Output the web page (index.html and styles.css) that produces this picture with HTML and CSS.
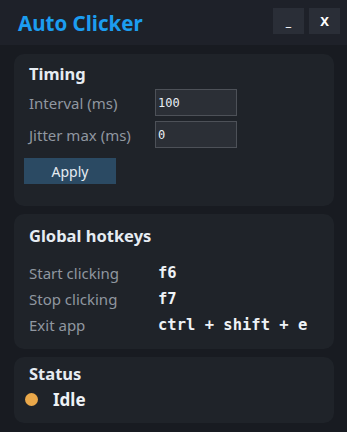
FILE: index.html
```html
<!DOCTYPE html>
<html lang="en">
<head>
    <meta charset="UTF-8">
    <meta name="viewport" content="width=device-width, initial-scale=1.0">
    <title>Auto Clicker</title>
    <link rel="stylesheet" href="styles.css">
</head>
<body>
    <div class="titlebar">
        <h1>Auto Clicker</h1>
        <div class="window-buttons">
            <button class="win-btn">_</button>
            <button class="win-btn">X</button>
        </div>
    </div>

    <div class="content">
        <div class="card timing">
            <h2>Timing</h2>
            <div class="field">
                <label for="interval">Interval (ms)</label>
                <input id="interval" type="text" value="100">
            </div>
            <div class="field">
                <label for="jitter">Jitter max (ms)</label>
                <input id="jitter" type="text" value="0">
            </div>
            <button class="apply">Apply</button>
        </div>

        <div class="card hotkeys">
            <h2>Global hotkeys</h2>
            <div class="hotkey-list">
                <span class="hk-label">Start clicking</span><span class="hk-key">f6</span>
                <span class="hk-label">Stop clicking</span><span class="hk-key">f7</span>
                <span class="hk-label">Exit app</span><span class="hk-key">ctrl + shift + e</span>
            </div>
        </div>

        <div class="card status">
            <h2>Status</h2>
            <div class="status-row">
                <span class="dot"></span>
                <span class="status-text">Idle</span>
            </div>
        </div>
    </div>
</body>
</html>
```

FILE: styles.css
```css
* {
    box-sizing: border-box;
    font-family: "Noto Sans", "Open Sans", sans-serif;
}
body {
    margin: 0;
    background-color: #181b21;
    color: #e6e9ee;
    width: 347px;
    height: 432px;
    overflow: hidden;
}
.titlebar {
    height: 45px;
    background-color: #1e2129;
    display: flex;
    align-items: flex-start;
    justify-content: space-between;
    padding: 0 7px 0 18px;
}
h1 {
    margin: 9px 0 0 0;
    font-size: 20.5px;
    font-weight: 700;
    color: #1c9df0;
    line-height: 28px;
}
.window-buttons {
    display: flex;
    gap: 5px;
    margin-top: 8px;
}
.win-btn {
    width: 31px;
    height: 26px;
    border: none;
    background-color: #2a2e37;
    color: #ffffff;
    font-size: 13px;
    font-weight: 700;
    padding: 0;
}
.content {
    display: flex;
    flex-direction: column;
    gap: 8px;
    padding: 9px 13px 0 14px;
}
.card {
    background-color: #1f2329;
    border-radius: 10px;
    padding: 8px 15px 0 15px;
}
h2 {
    margin: 0;
    font-size: 16.5px;
    font-weight: 700;
    color: #e6ecf2;
    line-height: 24px;
}
.timing {
    height: 152px;
}
.field {
    display: flex;
    align-items: center;
    height: 27px;
    margin-top: 3px;
}
.field + .field {
    margin-top: 5px;
}
label {
    width: 126px;
    font-size: 15px;
    color: #9097a0;
}
input {
    width: 82px;
    height: 27px;
    background-color: #2b2f36;
    border: 1px solid #4d5158;
    color: #e8eef4;
    font-family: "DejaVu Sans Mono", monospace;
    font-size: 12px;
    padding: 0 0 0 2px;
}
.apply {
    margin: 10px 0 0 -5px;
    width: 92px;
    height: 26px;
    border: none;
    background-color: #2b4a63;
    color: #e6ecf2;
    font-size: 14px;
    padding: 0;
}
.hotkeys {
    height: 135px;
    padding-top: 10px;
}
.hotkey-list {
    display: grid;
    grid-template-columns: 129px 1fr;
    row-gap: 4px;
    margin-top: 14px;
    align-items: center;
}
.hk-label {
    font-size: 15px;
    color: #9097a0;
    line-height: 22px;
}
.hk-key {
    font-family: "DejaVu Sans Mono", monospace;
    font-size: 15.5px;
    font-weight: 700;
    color: #eef2f6;
    line-height: 22px;
}
.status {
    height: 66px;
    padding-top: 5px;
}
.status-row {
    display: flex;
    align-items: center;
    margin: 2px 0 0 -4px;
}
.dot {
    width: 13px;
    height: 13px;
    border-radius: 50%;
    background-color: #eaa84a;
}
.status-text {
    margin-left: 15px;
    font-size: 17px;
    font-weight: 700;
    color: #eef2f6;
}
```
